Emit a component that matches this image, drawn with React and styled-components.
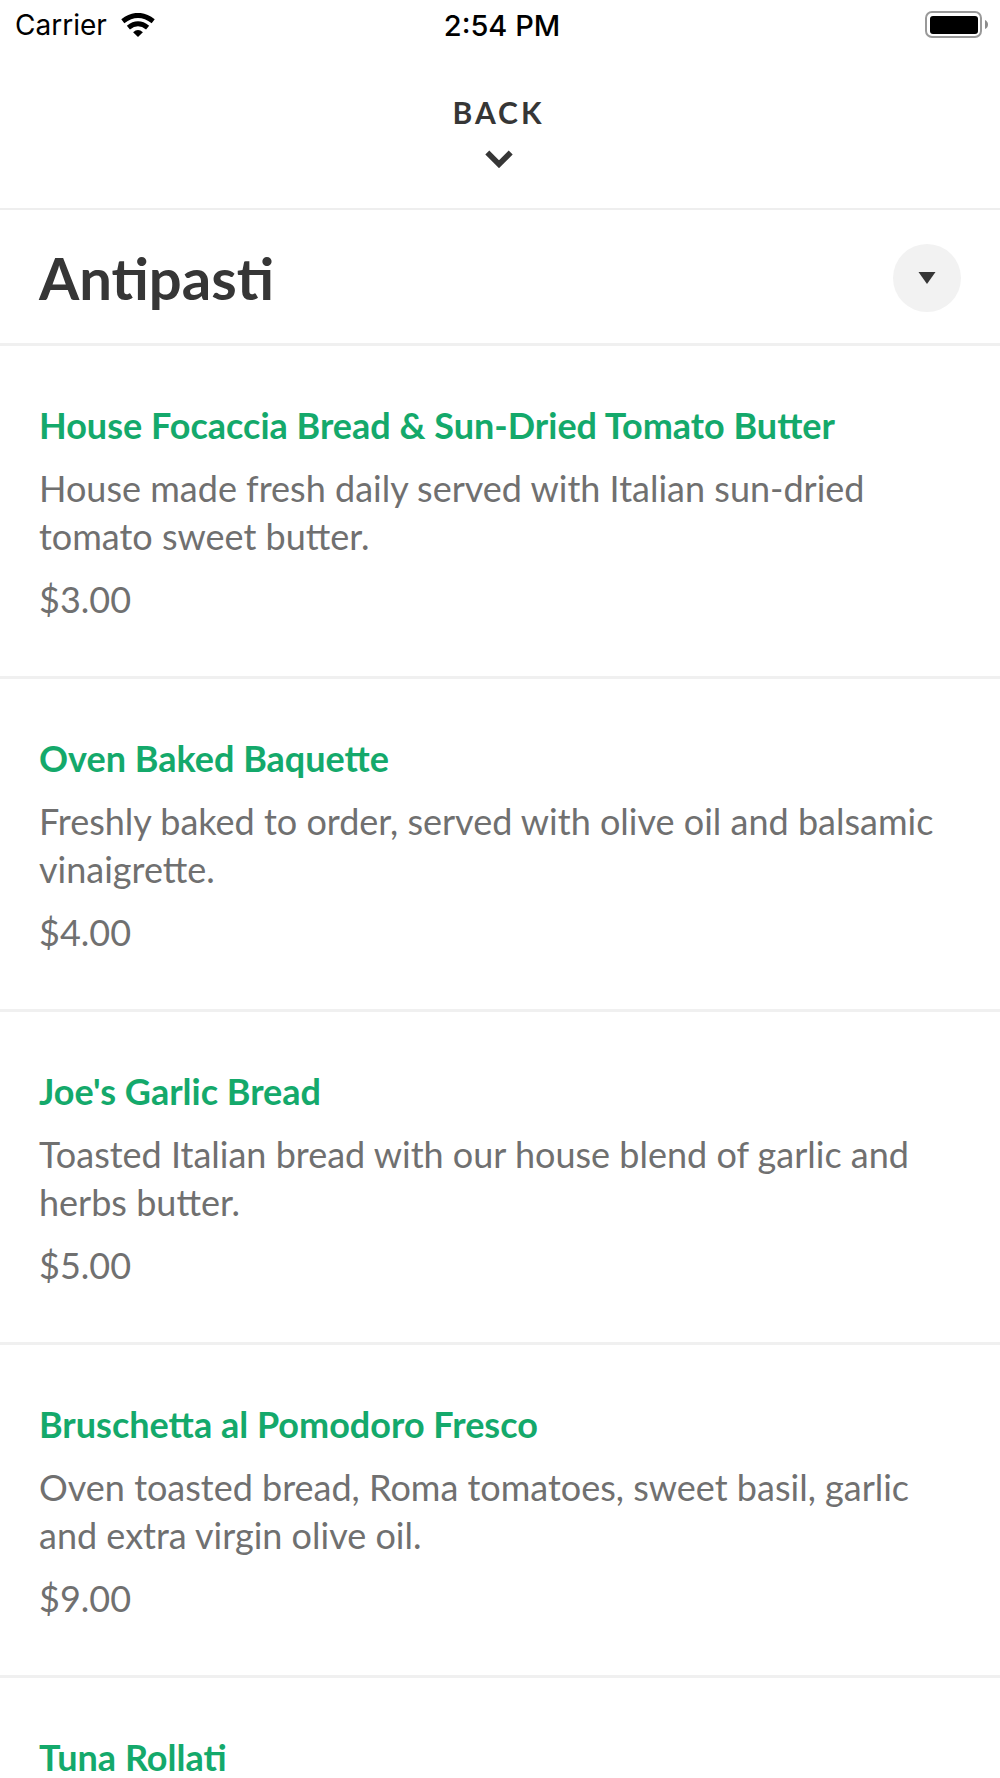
import styled, { createGlobalStyle } from "styled-components"

const items = [
  {
    name: "House Focaccia Bread & Sun-Dried Tomato Butter",
    description: "House made fresh daily served with Italian sun-dried tomato sweet butter.",
    price: "$3.00",
  },
  {
    name: "Oven Baked Baquette",
    description: "Freshly baked to order, served with olive oil and balsamic vinaigrette.",
    price: "$4.00",
  },
  {
    name: "Joe's Garlic Bread",
    description: "Toasted Italian bread with our house blend of garlic and herbs butter.",
    price: "$5.00",
  },
  {
    name: "Bruschetta al Pomodoro Fresco",
    description: "Oven toasted bread, Roma tomatoes, sweet basil, garlic and extra virgin olive oil.",
    price: "$9.00",
  },
  { name: "Tuna Rollati" },
]

function WifiIcon() {
  return (
    <svg width="34" height="24" viewBox="0 0 34 24" aria-hidden="true">
      <g fill="none" stroke="#000" strokeWidth="5">
        <path d="M1.8 8.2 Q17 -3.4 32.2 8.2" />
        <path d="M7.4 14.6 Q17 7 26.6 14.6" />
      </g>
      <path d="M12.1 19.2 Q17 14.8 21.9 19.2 L17 24 Z" fill="#000" />
    </svg>
  )
}

function BatteryIcon() {
  return (
    <svg width="64" height="28" viewBox="0 0 64 28" aria-hidden="true">
      <rect x="1" y="1" width="55" height="25" rx="6" fill="none" stroke="#999" strokeWidth="2" />
      <rect x="5" y="5" width="48" height="18" rx="3" fill="#000" />
      <path d="M60 9 Q63 10.5 63 13.5 Q63 16.5 60 18 Z" fill="#8c8c8c" />
    </svg>
  )
}

export default function App() {
  return (
    <St.Screen>
      <GlobalStyle />
      <St.StatusBar>
        <St.Carrier>
          Carrier
          <WifiIcon />
        </St.Carrier>
        <St.Time>2:54 PM</St.Time>
        <St.Battery>
          <BatteryIcon />
        </St.Battery>
      </St.StatusBar>

      <St.BackButton type="button">
        Back
        <svg width="28" height="18" viewBox="0 0 28 18" aria-hidden="true">
          <path d="M2.3 2.5 L14 14.2 L25.7 2.5" fill="none" stroke="#363636" strokeWidth="5.6" />
        </svg>
      </St.BackButton>

      <St.Section>
        <St.SectionTitle>Antipasti</St.SectionTitle>
        <St.ToggleButton type="button" aria-label="Choose a category">
          <svg width="18" height="12" viewBox="0 0 18 12" aria-hidden="true">
            <path d="M0.5 0 H17.5 L9 12 Z" fill="#363636" />
          </svg>
        </St.ToggleButton>
      </St.Section>

      <St.Menu>
        {items.map((item) => (
          <St.Item key={item.name}>
            <St.Name>{item.name}</St.Name>
            {item.description && <St.Text>{item.description}</St.Text>}
            {item.price && <St.Text>{item.price}</St.Text>}
          </St.Item>
        ))}
      </St.Menu>
    </St.Screen>
  )
}

const GlobalStyle = createGlobalStyle`
  * {
    box-sizing: border-box;
  }

  body {
    margin: 0;
    background-color: white;
    font-family: Lato, "Liberation Sans", sans-serif;
  }
`

const St = {
  Screen: styled.div`
    display: flex;
    flex-direction: column;
    height: 100vh;
  `,
  StatusBar: styled.header`
    display: grid;
    grid-template-columns: 1fr auto 1fr;
    align-items: center;
    flex-shrink: 0;
    height: 50px;
    padding: 0 11px 0 15px;
    color: black;
    font-family: Inter, "Liberation Sans", sans-serif;
    font-size: 28px;
  `,
  Carrier: styled.div`
    display: flex;
    align-items: center;
    gap: 14px;
  `,
  Time: styled.div`
    font-size: 29px;
    font-weight: 500;
  `,
  Battery: styled.div`
    display: flex;
    justify-content: flex-end;
  `,
  BackButton: styled.button`
    display: flex;
    flex-direction: column;
    align-items: center;
    flex-shrink: 0;
    gap: 20px;
    height: 160px;
    padding: 44px 3px 0 0;
    border: none;
    border-bottom: 2px solid #eeeeee;
    background-color: white;
    color: #363636;
    font-family: inherit;
    font-size: 30px;
    font-weight: bold;
    line-height: 36px;
    letter-spacing: 3px;
    text-transform: uppercase;
    cursor: pointer;
  `,
  Section: styled.div`
    display: flex;
    justify-content: space-between;
    align-items: center;
    flex-shrink: 0;
    height: 136px;
    padding: 3px 39px 0;
    border-bottom: 3px solid #f0f0f0;
  `,
  SectionTitle: styled.h1`
    margin: 0;
    color: #363636;
    font-size: 58px;
    font-weight: bold;
    line-height: 72px;
  `,
  ToggleButton: styled.button`
    display: flex;
    justify-content: center;
    align-items: center;
    width: 68px;
    height: 68px;
    padding: 0;
    border: none;
    border-radius: 50%;
    background-color: #f2f2f2;
    cursor: pointer;
  `,
  Menu: styled.ul`
    flex: 1;
    min-height: 0;
    margin: 0;
    padding: 0;
    list-style: none;
    overflow-y: auto;
    scrollbar-width: none;
  `,
  Item: styled.li`
    display: flex;
    flex-direction: column;
    gap: 15px;
    padding: 55px 39px 53px;
    border-bottom: 3px solid #f0f0f0;
    font-size: 36px;
    line-height: 48px;
  `,
  Name: styled.h2`
    margin: 0;
    color: #14a96b;
    font-size: inherit;
    font-weight: bold;
  `,
  Text: styled.p`
    margin: 0;
    color: #707070;
  `,
}
